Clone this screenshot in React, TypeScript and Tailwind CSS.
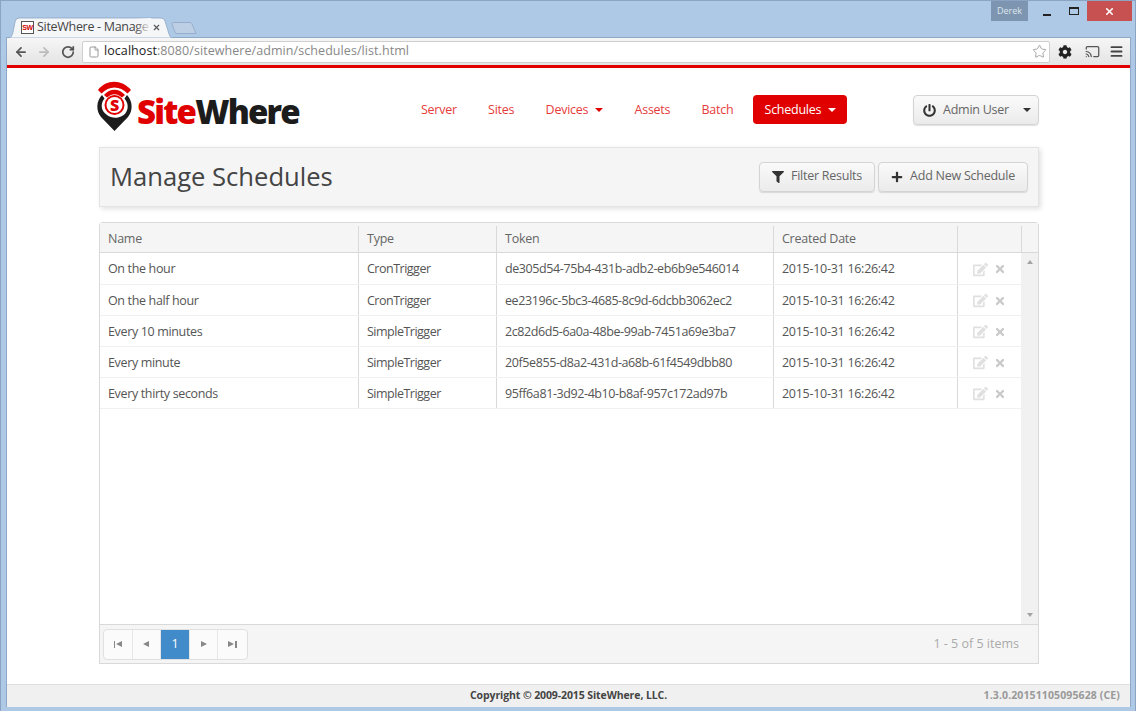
import { ArrowLeft, ArrowRight, RotateCw, File, Star, Cast, Menu, X } from 'lucide-react';
import { FaCog, FaEdit, FaFilter, FaPlus, FaPowerOff, FaTimes } from 'react-icons/fa';
import type { ReactNode } from 'react';

const rows = [
  ['On the hour', 'CronTrigger', 'de305d54-75b4-431b-adb2-eb6b9e546014'],
  ['On the half hour', 'CronTrigger', 'ee23196c-5bc3-4685-8c9d-6dcbb3062ec2'],
  ['Every 10 minutes', 'SimpleTrigger', '2c82d6d5-6a0a-48be-99ab-7451a69e3ba7'],
  ['Every minute', 'SimpleTrigger', '20f5e855-d8a2-431d-a68b-61f4549dbb80'],
  ['Every thirty seconds', 'SimpleTrigger', '95ff6a81-3d92-4b10-b8af-957c172ad97b'],
];

function Caret({ className }: { className: string }) {
  return <span className={`ml-[7px] inline-block h-0 w-0 border-x-[4px] border-t-[4px] border-x-transparent align-middle ${className}`} />;
}

function Logo() {
  return (
    <div className="flex items-start">
      <svg width="38" height="52" viewBox="0 0 38 52" className="shrink-0">
        <path d="M2 10 C10 -1 26 -1 35 10 L31.5 13.5 C24 5.5 13 5.5 5.5 13.5 Z" fill="#e00000" />
        <path d="M8 15 C14 8 23 8 29 15 L26 17.5 C21 13 16 13 11 17.5 Z" fill="#e00000" />
        <path d="M6 15 C0 21 0 31 5 37 L18.5 51 L32 37 C37 31 37 21 31 15 L28.5 18.5 C34 25 32 33 26 36 C21 39 15 38 11 35 C5 31 4 24 8.5 18.5 Z" fill="#1c1c1c" />
        <circle cx="18.5" cy="25" r="10" fill="#e00000" />
        <circle cx="18.5" cy="25" r="8" fill="#fff" />
        <text x="18.5" y="31" textAnchor="middle" fontSize="16" fontWeight="800" fill="#e00000" fontFamily="'Open Sans', sans-serif">S</text>
      </svg>
      <span className="mt-[13px] ml-[3px] text-[33px] leading-[38px] font-extrabold tracking-[-1.8px] text-[#1c1c1c]">
        <span className="text-[#e00000]">Site</span>Where
      </span>
    </div>
  );
}

function NavLink({ label, caret }: { label: string; caret?: boolean }) {
  return (
    <span className="flex items-center text-[#e63b3b]">
      {label}
      {caret && <Caret className="border-t-[#e00000]" />}
    </span>
  );
}

function ToolButton({ children, width }: { children: ReactNode; width: string }) {
  return (
    <button className={`flex h-[30px] items-center justify-center gap-[7px] rounded-[4px] border border-[#d4d4d4] bg-gradient-to-b from-[#fafafa] to-[#ebebeb] pb-[1px] text-[#666] shadow-[0_1px_1px_rgba(0,0,0,0.12)] ${width}`}>
      {children}
    </button>
  );
}

function PagerCell({ children, active }: { children: ReactNode; active?: boolean }) {
  return (
    <div className={`flex h-[29px] w-[28.6px] items-center justify-center border-r border-[#e6e6e6] last:border-r-0 ${active ? 'bg-[#428bca] text-white' : 'text-[#888]'}`}>
      {children}
    </div>
  );
}

function Tri({ dir }: { dir: 'l' | 'r' }) {
  return (
    <span className={`h-0 w-0 border-y-[3.5px] border-y-transparent ${dir === 'l' ? 'border-r-[6px] border-r-[#888]' : 'border-l-[6px] border-l-[#888]'}`} />
  );
}

export default function App() {
  return (
    <div className="flex h-[711px] w-[1136px] flex-col overflow-hidden border border-b-0 border-[#8ba4c4] bg-[#adc9e6] font-['Open_Sans',sans-serif] text-[12.5px] tracking-[-0.25px] text-[#555]">
      {/* window title bar */}
      <div className="flex h-[37px] shrink-0 items-start justify-between pr-[3px] pl-[7px]">
        <div className="flex h-full items-end">
          <div className="relative flex h-[21px] w-[165px] items-center pr-[12px] pl-[13px] text-[12.5px] tracking-[-0.3px] text-[#444]">
            <svg width="165" height="21" viewBox="0 0 165 21" className="absolute inset-0">
              <path d="M0 21 C3 21 4 19 5 15 L7 5 C8 2 9 1 12 1 L152 1 C155 1 156 2 157 4 L161 17 C162 20 163 21 165 21 Z" fill="#f5f6f8" stroke="#8ea6c4" strokeWidth="0.8" />
            </svg>
            <span className="relative flex h-[13px] w-[13px] shrink-0 items-center justify-center border border-[#555] bg-white font-['Liberation_Sans',sans-serif] text-[7px] leading-none font-bold text-[#d00000]">SW</span>
            <span className="relative ml-[3px] w-[110px] whitespace-nowrap">
              SiteWhere - Manage
              <span className="absolute top-0 right-[-4px] h-full w-[16px] bg-gradient-to-r from-transparent to-[#f5f6f8]" />
            </span>
            <X size={9} strokeWidth={3} className="relative ml-auto shrink-0 text-[#555]" />
          </div>
          <svg width="26" height="12" viewBox="0 0 26 12" className="mb-[4px] -ml-[2px]">
            <path d="M4.5 11.5 L1 2 C0.7 1 1.3 0.5 2 0.5 L19 0.5 C20 0.5 20.5 1 21 2 L25 11.5 Z" fill="#bccfe4" stroke="#96aecb" />
          </svg>
        </div>
        <div className="flex items-start">
          <div className="mr-[5px] flex h-[20px] w-[37px] items-center justify-center bg-[#7d95b0] text-[9px] tracking-normal text-[#dfe6ee]">Derek</div>
          <div className="flex h-[20px] w-[27px] items-center justify-center"><span className="mt-[7px] h-[2px] w-[8px] bg-[#222]" /></div>
          <div className="flex h-[20px] w-[27px] items-center justify-center"><span className="h-[8px] w-[10px] border border-t-2 border-[#222]" /></div>
          <div className="flex h-[20px] w-[45px] items-center justify-center bg-[#c75050] text-white"><X size={11} strokeWidth={3.5} /></div>
        </div>
      </div>

      {/* browser window body */}
      <div className="mr-[5px] ml-[6px] flex min-h-0 flex-1 flex-col bg-white shadow-[0_0_0_1px_#8fa9c8]">
        <div className="flex h-[27px] shrink-0 items-center bg-gradient-to-b from-[#f6f6f6] to-[#e4e4e4] pl-[7px]">
          <ArrowLeft size={14} strokeWidth={3} className="text-[#555]" />
          <ArrowRight size={14} strokeWidth={3} className="ml-[9px] text-[#bbb]" />
          <RotateCw size={14} strokeWidth={3} className="ml-[10px] text-[#555]" />
          <div className="ml-[7px] flex h-[22px] w-[968px] items-center rounded-[2px] border border-[#cfcfcf] bg-white pr-[2px] pl-[5px] text-[#888]">
            <File size={12} className="text-[#999]" />
            <span className="ml-[4px] flex-1 text-[12.5px] tracking-[0.07px]"><span className="text-[#222]">localhost</span>:8080/sitewhere/admin/schedules/list.html</span>
            <Star size={15} strokeWidth={1.4} className="text-[#999]" />
          </div>
          <FaCog size={14} className="ml-[8px] text-[#222]" />
          <Cast size={15} className="ml-[13px] text-[#555]" />
          <Menu size={15} strokeWidth={3} className="ml-[9px] text-[#444]" />
        </div>
        <div className="h-[3px] shrink-0 bg-[#e00000]" />

        {/* page */}
        <div className="flex min-h-0 flex-1 flex-col pr-[91px] pl-[92px]">
          <div className="flex h-[79px] shrink-0 items-start">
            <div className="mt-[12px] -ml-[3px] w-[325px] shrink-0"><Logo /></div>
            <div className="mt-[27px] flex items-center">
              <div className="flex h-[29px] items-center gap-[31.25px] pt-[1px]">
                <NavLink label="Server" />
                <NavLink label="Sites" />
                <NavLink label="Devices" caret />
                <NavLink label="Assets" />
                <NavLink label="Batch" />
              </div>
              <div className="ml-[20px] flex h-[29px] w-[94px] items-center justify-center rounded-[4px] bg-[#e00000] pt-[1px] text-white">
                Schedules<Caret className="border-t-white" />
              </div>
            </div>
            <button className="mt-[27px] ml-auto flex h-[30px] w-[126px] items-center justify-center gap-[7px] rounded-[4px] border border-[#d4d4d4] bg-gradient-to-b from-[#fafafa] to-[#ebebeb] pl-[2px] text-[#666] shadow-[0_1px_1px_rgba(0,0,0,0.12)]">
              <FaPowerOff size={13} className="text-[#333]" />
              Admin User
              <Caret className="-ml-[1px] border-t-[#333]" />
            </button>
          </div>

          {/* heading */}
          <div className="flex h-[60px] shrink-0 items-center justify-between border border-[#e3e3e3] bg-[#f5f5f5] px-[10px] shadow-[2px_2px_5px_rgba(0,0,0,0.12)]">
            <h1 className="-mt-[1px] text-[25.6px] leading-none tracking-normal text-[#444]">Manage Schedules</h1>
            <div className="flex gap-[3px]">
              <ToolButton width="w-[116px]"><FaFilter size={12} className="text-[#333]" />Filter Results</ToolButton>
              <ToolButton width="w-[150px]"><FaPlus size={12} className="text-[#333]" />Add New Schedule</ToolButton>
            </div>
          </div>

          {/* grid */}
          <div className="mt-[15px] flex h-[402px] shrink-0 flex-col rounded-t-[4px] border border-b-0 border-[#d9d9d9]">
            <div className="flex h-[30px] shrink-0 items-center border-b border-[#d9d9d9] bg-[#f5f5f5] pt-[3px] text-[#666]">
              <div className="flex h-full w-[259px] items-center border-r border-[#d9d9d9] pl-[8px]">Name</div>
              <div className="flex h-full w-[138px] items-center border-r border-[#d9d9d9] pl-[8px]">Type</div>
              <div className="flex h-full w-[277px] items-center border-r border-[#d9d9d9] pl-[8px]">Token</div>
              <div className="flex h-full w-[184px] items-center border-r border-[#d9d9d9] pl-[8px]">Created Date</div>
              <div className="h-full w-[64px] border-r border-[#d9d9d9]" />
            </div>
            <div className="flex min-h-0 flex-1">
              <div className="min-w-0 flex-1">
                {rows.map(([name, type, token], i) => (
                  <div key={token} className={`flex items-center border-b border-[#f0f0f0] text-[#555] ${i === 0 ? 'h-[32px]' : 'h-[31px]'}`}>
                    <div className="flex h-full w-[259px] items-center border-r border-[#d9d9d9] pt-[2px] pl-[8px] tracking-[-0.35px]">{name}</div>
                    <div className="flex h-full w-[138px] items-center border-r border-[#d9d9d9] pt-[2px] pl-[8px] tracking-[-0.5px]">{type}</div>
                    <div className="flex h-full w-[277px] items-center border-r border-[#d9d9d9] pt-[2px] pl-[8px] tracking-[-0.4px]">{token}</div>
                    <div className="flex h-full w-[184px] items-center border-r border-[#d9d9d9] pt-[2px] pl-[8px] tracking-[-0.28px]">2015-10-31 16:26:42</div>
                    <div className="flex h-full flex-1 items-center gap-[6px] pt-[1px] pl-[15px]">
                      <FaEdit size={15} className="text-[#e0e0e0]" />
                      <FaTimes size={12} className="text-[#c9c9c9]" />
                    </div>
                  </div>
                ))}
              </div>
              <div className="flex w-[17px] shrink-0 flex-col items-center justify-between bg-[#f1f1f1] py-[7px]">
                <span className="h-0 w-0 border-x-[3.5px] border-b-[4px] border-x-transparent border-b-[#a3a3a3]" />
                <span className="h-0 w-0 border-x-[3.5px] border-t-[4px] border-x-transparent border-t-[#a3a3a3]" />
              </div>
            </div>
          </div>

          {/* pager */}
          <div className="flex h-[40px] shrink-0 items-center justify-between border border-[#d9d9d9] bg-[#f5f5f5] pr-[19px] pl-[3px]">
            <div className="flex overflow-hidden rounded-[4px] border border-[#e0e0e0] bg-[#fbfbfb]">
              <PagerCell><span className="mr-[1px] h-[7px] w-[1.5px] bg-[#888]" /><Tri dir="l" /></PagerCell>
              <PagerCell><Tri dir="l" /></PagerCell>
              <PagerCell active>1</PagerCell>
              <PagerCell><Tri dir="r" /></PagerCell>
              <PagerCell><Tri dir="r" /><span className="ml-[1px] h-[7px] w-[1.5px] bg-[#888]" /></PagerCell>
            </div>
            <span className="tracking-normal text-[#aaa]">1 - 5 of 5 items</span>
          </div>

          <div className="flex-1" />
        </div>

        {/* footer */}
        <div className="flex h-[23px] shrink-0 items-center border-t border-[#e0e0e0] bg-[#f0f0f0] pr-[10px] pl-[463px] text-[10.5px] font-bold tracking-normal">
          <span className="tracking-[-0.1px] text-[#444]">Copyright © 2009-2015 SiteWhere, LLC.</span>
          <span className="ml-auto tracking-[0.12px] text-[#999]">1.3.0.20151105095628 (CE)</span>
        </div>
      </div>
      <div className="h-[4px] shrink-0 bg-[#adc9e6]" />
    </div>
  );
}
